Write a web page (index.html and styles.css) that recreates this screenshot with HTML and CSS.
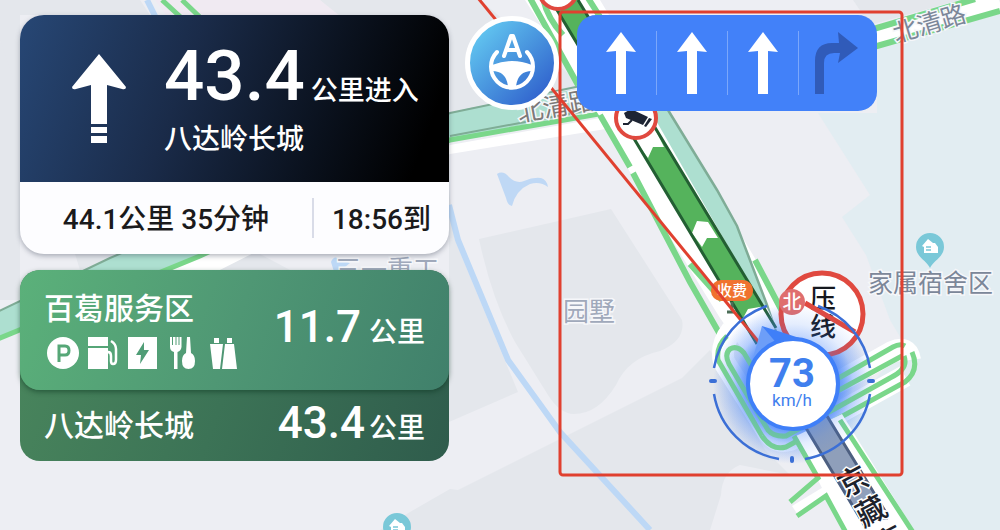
FILE: index.html
```html
<!DOCTYPE html>
<html lang="zh-CN">
<head>
<meta charset="utf-8">
<meta name="viewport" content="width=device-width, initial-scale=1">
<title>导航</title>
<link rel="stylesheet" href="styles.css">
</head>
<body>
<main class="nav">
  <svg class="map" viewBox="0 0 1000 530" preserveAspectRatio="xMidYMid slice" role="img" aria-label="地图">
    <defs>
      <radialGradient id="glow">
        <stop offset="0.55" stop-color="#3f7ff8" stop-opacity="0.75"/>
        <stop offset="0.75" stop-color="#3f7ff8" stop-opacity="0.28"/>
        <stop offset="1" stop-color="#3f7ff8" stop-opacity="0"/>
      </radialGradient>
      <g id="house">
        <path d="M0 21 C-3 14 -14 10 -14 0 A14 14 0 0 1 14 0 C14 10 3 14 0 21Z" fill="#7ac8d8"/>
        <path d="M-8 -1 L-2 -8 L3 -4 H5 L8 0 V6 H-6 V0Z" fill="#fff"/>
        <path d="M-4 0H1M-4 3H1" stroke="#7ac8d8" stroke-width="1.5"/>
      </g>
    </defs>

    <!-- land -->
    <g class="land">
      <path d="M0 0H140L150 15H20V190L0 40Z"/>
      <path d="M0 40L20 100V300H0Z"/>
      <path d="M320 0H480L600 100L450 125V20H340Z"/>
      <path d="M75 254H260L290 270H80Z"/>
      <path d="M449 190L455 240L518 392L449 422Z"/>
      <path d="M479 239L611 209L682 320Q686 340 660 351Q628 358 616 385Q598 414 574 414Q560 414 548 395L515 342Q492 300 479 239Z"/>
      <path d="M410 512L450 489L458 490L640 399L682 378L710 350L765 450L790 475L740 465Q722 472 721 495L710 530H380Z"/>
      <path d="M853 0H960L870 25Z"/>
    </g>
    <path d="M155 0H320L345 20H170Z" fill="#f0eaf2"/>
    <path d="M818 113L870 195L842 217L866 255L890 320L905 345L840 420L912 530H1000V12L877 48V113Z" fill="#e2edf2"/>
    <path d="M497 174Q503 170 509 177Q516 184 524 181Q533 177 541 178Q547 180 548 187Q540 181 530 184Q516 190 512 206Q508 206 506 198Z" fill="#bfd8f5"/>
    <path d="M147 0L156 18M449 205L458 240L508 360L560 432L650 530" fill="none" stroke="#bdd8f6" stroke-width="6"/>
    <path d="M331 262Q334 254 341 260L350 263L335 275Z" fill="#bdd8f6"/>

    <!-- minor roads -->
    <g fill="none" stroke="#7ad78a" stroke-width="5">
      <path d="M162 0L186 22M182 0L205 22"/>
    </g>
    <path d="M-5 332L200 250L450 145L600 118L612 128L450 154L200 280L-5 340Z" fill="#fff"/>
    <path d="M-5 313L110 258L450 113L470 108L600 85V110L450 139L200 255L-5 340Z" fill="#addfd0"/>
    <path d="M-5 313L110 258L450 113L600 82M450 136L600 108" fill="none" stroke="#7fac96" stroke-width="2"/>
    <path d="M-5 340L200 256L450 140L610 112" fill="none" stroke="#7ad78a" stroke-width="5"/>
    <path d="M870 40L1000 3" stroke="#fff" stroke-width="20"/>
    <path d="M870 30L975 -1M870 48L1000 11" stroke="#7ad78a" stroke-width="6"/>

    <!-- motorway corridor -->
    <path d="M525 0H600L780 300L805 360L750 360L720 318L630 172L600 117Z" fill="#fff"/>
    <path d="M530 -2L578 85M543 -2Q547 18 563 35M588 -2L602 20M600 115L630 167M633 173L690 282L726 345M690 264L722 300M755 260L800 345" fill="none" stroke="#7ad78a" stroke-width="6"/>
    <path d="M650 110H668L717 190L737 226Q750 260 767 305L776 330Z" fill="#addfd0"/>
    <path d="M668 110L717 190L737 226Q750 260 767 305L776 332" fill="none" stroke="#7fac96" stroke-width="2.5"/>
    <path d="M551 0H578L776 328L754 338Z" fill="#55b35c"/>
    <path d="M622 115H648L664 147H653L648 158L634 139ZM692 233L697 221L708 222L718 238H707L702 247ZM742 320L748 309L766 306L777 328L756 340Z" fill="#fff"/>
    <path d="M551 0L757 344M578 0L776 328" stroke="#235f33" stroke-width="3"/>

    <!-- interchange -->
    <g fill="none" stroke="#fff" stroke-width="22" stroke-linejoin="round">
      <path d="M732 330Q720 345 724 362L768 432Q776 444 790 440L905 376"/>
      <path d="M835 384L892 352Q908 345 910 360"/>
    </g>
    <circle cx="793" cy="384" r="80" fill="url(#glow)"/>
    <g fill="none" stroke="#7ad78a" stroke-width="5" stroke-linejoin="round">
      <path d="M727 336Q716 346 718 360L762 436Q772 451 786 447L905 382Q920 370 912 352"/>
      <path d="M753 368L744 353Q737 345 730 349Q724 354 729 364L768 430Q774 437 786 436L890 378Q909 369 904 356"/>
      <path d="M830 383L893 347Q900 343 905 346M830 395L902 356"/>
    </g>
    <path d="M796 436L842 414L920 540H848Z" fill="#fff"/>
    <path d="M792 506L825 486L830 495L798 515Z" fill="#fff"/>
    <path d="M794 436L818 478L790 502M797 516L826 496L850 540M840 420L918 540" fill="none" stroke="#7ad78a" stroke-width="5"/>
    <path d="M806 428L827 416L888 520H862Z" fill="#8f9fba"/>
    <path d="M806 428L866 528M827 416L888 516" stroke="#4d5f80" stroke-width="3"/>

    <!-- map labels -->
    <g class="place">
      <text x="335" y="279">三一重工</text>
      <text x="563" y="321">园墅</text>
      <text class="place-strong" x="868" y="292">家属宿舍区</text>
      <text class="place-strong" transform="translate(896 43) rotate(-17)">北清路</text>
      <text class="place-road" transform="translate(519 122) rotate(-10)">北清路</text>
    </g>
    <g class="highway-name">
      <text transform="translate(853 481) rotate(-28)" y="11">京</text>
      <text transform="translate(871 511) rotate(-28)" y="11">藏</text>
      <text transform="translate(889 541) rotate(-28)" y="11">高</text>
    </g>
    <use href="#house" x="930" y="247"/>
    <use href="#house" x="397" y="527"/>

    <!-- road signs -->
    <circle cx="558" cy="-10" r="19" fill="#fff" stroke="#e0493f" stroke-width="4"/>
    <circle cx="636" cy="118" r="20" fill="#fff" stroke="#e0493f" stroke-width="4"/>
    <path d="M624 113L631 109L648 117L643 125L626 118ZM644 126L649 118L652 119L646 127Z" fill="#1d2433"/>
    <path d="M623 124H628L632 120" fill="none" stroke="#1d2433" stroke-width="2"/>
    <rect x="711" y="280" width="42" height="21" rx="10" fill="#f0722f"/>
    <text class="toll" x="732" y="296">收费</text>
    <path d="M732 302V310M727 312H735" stroke="#4b6d56" stroke-width="3"/>
    <circle cx="822" cy="314" r="41" fill="#fff" stroke="#e0493f" stroke-width="5"/>
    <g class="sign-text"><text x="823" y="308">压</text><text x="823" y="336">线</text></g>
    <path d="M805 303L855 332" stroke="#e0493f" stroke-width="5"/>
    <path class="marker-line" d="M478 -2L762 346"/>
    <circle cx="792" cy="302" r="13" fill="#df6e6e"/>
    <text class="north" x="792" y="309">北</text>

    <!-- current position -->
    <circle cx="793" cy="384" r="80" fill="url(#glow)" opacity="0.5"/>
    <g fill="none" stroke="#3b6fd6" stroke-width="2.5">
      <path d="M714 368A79 79 0 0 1 767 306M818 306A79 79 0 0 1 870 368M870 394A79 79 0 0 1 805 459M779 459A79 79 0 0 1 714 394"/>
    </g>
    <path d="M711 381H715M869 381H873M792 458V461" stroke="#3b6fd6" stroke-width="4" stroke-linecap="round"/>
    <path d="M762 326L812 342L760 362Z" fill="#3f7ff8"/>
    <path d="M762 326L753 358L778 345Z" fill="#6d9ef8"/>
    <circle cx="793" cy="384" r="45" fill="#fff" stroke="#3f7ff8" stroke-width="4"/>
    <text class="speed" x="792" y="387">73</text>
    <text class="speed-unit" x="792" y="406">km/h</text>

    <rect class="marker-line" x="560" y="12" width="342" height="463" rx="3"/>
  </svg>

  <section class="panel" aria-label="路线信息">
    <article class="card">
      <div class="turn">
        <svg class="turn-arrow" viewBox="0 0 54 90" aria-hidden="true">
          <path d="M27 0L54 33Q54 36 50 35L35 31V70H19V31L4 35Q0 36 0 33ZM19 73H35V79H19ZM19 82H35V89H19Z" fill="#fff"/>
        </svg>
        <div class="turn-text">
          <p class="turn-distance"><strong>43.4</strong><span>公里进入</span></p>
          <p class="turn-road">八达岭长城</p>
        </div>
      </div>
      <div class="eta">
        <span class="eta-remaining">44.1公里 35分钟</span>
        <span class="eta-arrival">18:56到</span>
      </div>
    </article>

    <article class="exits">
      <div class="exit exit-near">
        <div class="exit-info">
          <h2 class="exit-name">百葛服务区</h2>
          <div class="facilities">
            <svg viewBox="0 0 32 32" aria-label="停车场"><circle cx="16" cy="16" r="16" fill="#fff"/><path d="M12 25V9H18Q22 9 22 13.500T18 18H12" fill="none" stroke="#56a777" stroke-width="3"/></svg>
            <svg viewBox="0 0 32 32" aria-label="加油站"><path d="M1 0H21V9H1ZM1 11H21V32H1Z" fill="#fff"/><path d="M21 15Q24 15 24 19V24Q24 27 26 27Q29 27 29 23V12Q29 7 24 4" fill="none" stroke="#fff" stroke-width="2.500"/></svg>
            <svg viewBox="0 0 32 32" aria-label="充电站"><path d="M1 0H30V32H1Z" fill="#fff"/><path d="M17 5L9 18H14L13 27L22 13H17Z" fill="#4f9d76"/></svg>
            <svg viewBox="0 0 32 32" aria-label="餐饮"><path d="M3 0H5V8H6V0H8.500V8H9.500V0H11.500V8H12.500V0H14.500V10Q14 14 10.500 15V32H7V15Q3 14 3 10ZM20 0H23L24 16Q28 18 28 24Q28 32 21.500 32T15 24Q15 18 19 16Z" fill="#fff"/></svg>
            <svg viewBox="0 0 32 32" aria-label="卫生间"><path d="M7 1H12V6H7ZM20 1H25V6H20Z" fill="#fff"/><path d="M3 7H16L13 32H6ZM18 7H27L30 32H15Z" fill="#fff"/></svg>
          </div>
        </div>
        <p class="exit-distance"><strong>11.7</strong><span>公里</span></p>
      </div>
      <div class="exit exit-far">
        <h2 class="exit-name">八达岭长城</h2>
        <p class="exit-distance"><strong>43.4</strong><span>公里</span></p>
      </div>
    </article>
  </section>

  <button class="pilot" type="button" aria-label="辅助驾驶">
    <svg viewBox="0 0 84 84" aria-hidden="true">
      <g fill="none" stroke="#fff" stroke-linecap="round" stroke-linejoin="round">
        <path d="M34 35L41 15H43L50 35M37 29H47" stroke-width="4"/>
        <path d="M27 31A21 21 0 1 0 57 31" stroke-width="4"/>
      </g>
      <path d="M22 44Q42 36 62 44V50Q48 50 46 65H38Q36 50 22 50Z" fill="#fff"/>
    </svg>
  </button>

  <ul class="lanes" aria-label="车道">
    <li><svg viewBox="0 0 48 62" aria-label="直行"><path d="M19 62V19L9 20L24 0L39 20L29 19V62Z"/></svg></li>
    <li><svg viewBox="0 0 48 62" aria-label="直行"><path d="M19 62V19L9 20L24 0L39 20L29 19V62Z"/></svg></li>
    <li><svg viewBox="0 0 48 62" aria-label="直行"><path d="M19 62V19L9 20L24 0L39 20L29 19V62Z"/></svg></li>
    <li class="lane-off"><svg viewBox="0 0 48 62" aria-label="右转"><path d="M5 62V29Q5 11 22 11H29L28 0L48 16L28 31L30 21H24Q14 21 14 31V62Z"/></svg></li>
  </ul>
</main>
</body>
</html>
```

FILE: styles.css
```css
* {
  box-sizing: border-box;
}

body,
p,
h2,
ul {
  margin: 0;
  padding: 0;
}

body {
  font-family: Roboto, "Noto Sans CJK SC", sans-serif;
  font-weight: 500;
  background: #edeef3;
}

.nav {
  position: relative;
  display: flex;
  align-items: flex-start;
  min-height: 100vh;
  padding: 15px 20px;
  overflow: hidden;
}

/* map backdrop */
.map {
  position: absolute;
  inset: 0;
  width: 100%;
  height: 100%;
}

.land {
  fill: #e4e7ec;
}

.place {
  font-size: 26px;
  font-weight: 400;
  fill: #a0a9bb;
  stroke: #f6f7fa;
  stroke-width: 3px;
  paint-order: stroke;
}

.place-strong {
  font-size: 25px;
  fill: #7c8799;
}

.place-road {
  fill: #7d7a78;
}

.highway-name {
  font-size: 30px;
  font-weight: 500;
  fill: #1d222c;
  stroke: #fff;
  stroke-width: 3px;
  paint-order: stroke;
  text-anchor: middle;
}

.toll {
  font-size: 15px;
  fill: #fff;
  text-anchor: middle;
}

.sign-text {
  font-size: 26px;
  fill: #15181e;
  text-anchor: middle;
}

.north {
  font-size: 19px;
  fill: #fff;
  text-anchor: middle;
}

.speed {
  font-size: 40px;
  font-weight: 700;
  fill: #3f7fee;
  text-anchor: middle;
}

.speed-unit {
  font-size: 17px;
  font-weight: 400;
  fill: #3f7fee;
  text-anchor: middle;
}

.marker-line {
  fill: none;
  stroke: #e0402f;
  stroke-width: 3px;
}

/* left column */
.panel {
  position: relative;
  display: flex;
  flex: 0 1 429px;
  flex-direction: column;
  gap: 16px;
}

.card {
  overflow: hidden;
  border-radius: 24px;
  background: #fdfdff;
  box-shadow: 0 2px 5px rgba(40, 50, 70, 0.35);
}

.turn {
  display: flex;
  align-items: center;
  gap: 38px;
  height: 167px;
  padding-left: 52px;
  color: #fff;
  background: linear-gradient(110deg, #274775 0%, #1a2b49 38%, #0a111d 70%, #000 92%);
}

.turn-arrow {
  width: 54px;
  height: 90px;
}

.turn-text {
  display: flex;
  flex-direction: column;
  padding-top: 2px;
}

.turn-distance {
  display: flex;
  align-items: baseline;
  gap: 6px;
  font-size: 27px;
  line-height: 66px;
  white-space: nowrap;
}

.turn-distance strong {
  font-size: 71px;
  font-weight: 500;
}

.turn-road {
  font-size: 28px;
  line-height: 32px;
}

.eta {
  display: flex;
  align-items: center;
  height: 72px;
  font-size: 28px;
  line-height: 37px;
  color: #1a1a1c;
  white-space: nowrap;
}

.eta-remaining {
  flex: 1;
  padding-top: 3px;
  text-align: center;
}

.eta-arrival {
  padding: 3px 18px 0;
  border-left: 2px solid #d9dce8;
}

.exits {
  border-radius: 20px;
  color: #fff;
  background: linear-gradient(110deg, #4a875d, #3c7356 50%, #2f5c4c);
}

.exit {
  display: flex;
  align-items: center;
  justify-content: space-between;
  padding: 0 24px;
}

.exit-near {
  height: 120px;
  border-radius: 20px;
  background: linear-gradient(110deg, #5bb17a, #4f9774 50%, #40806b);
  box-shadow: 0 2px 5px rgba(10, 50, 30, 0.5);
}

.exit-far {
  height: 71px;
}

.exit-name {
  font-size: 30px;
  font-weight: 500;
  line-height: 40px;
}

.facilities {
  display: flex;
  gap: 8px;
  padding: 8px 3px 2px;
}

.facilities svg {
  width: 32px;
  height: 32px;
}

.exit-distance {
  display: flex;
  align-items: baseline;
  gap: 4px;
  font-size: 28px;
  line-height: 48px;
}

.exit-distance strong {
  font-size: 44px;
  font-weight: 500;
}

.exit-near .exit-distance {
  gap: 8px;
}

/* driving assist */
.pilot {
  position: relative;
  flex: none;
  width: 94px;
  height: 94px;
  margin: 1px 18px 0 16px;
  padding: 0;
  border: 5px solid #fff;
  border-radius: 50%;
  background: linear-gradient(135deg, #67d0f4 8%, #4a97df 48%, #2d5bcb 90%) border-box;
}

.pilot svg {
  display: block;
  width: 84px;
  height: 84px;
}

/* lane guidance */
.lanes {
  position: relative;
  display: flex;
  flex: 0 1 300px;
  padding: 16px 8px;
  border-radius: 19px;
  list-style: none;
  background: #4281f9;
}

.lanes li {
  display: flex;
  flex: 1;
  align-items: center;
  justify-content: center;
  height: 64px;
  border-left: 1px solid #7ba7fb;
}

.lanes li:first-child {
  border-left-color: transparent;
}

.lanes svg {
  width: 48px;
  height: 62px;
  fill: #fff;
}

.lanes .lane-off svg {
  fill: #305bb9;
}
```
